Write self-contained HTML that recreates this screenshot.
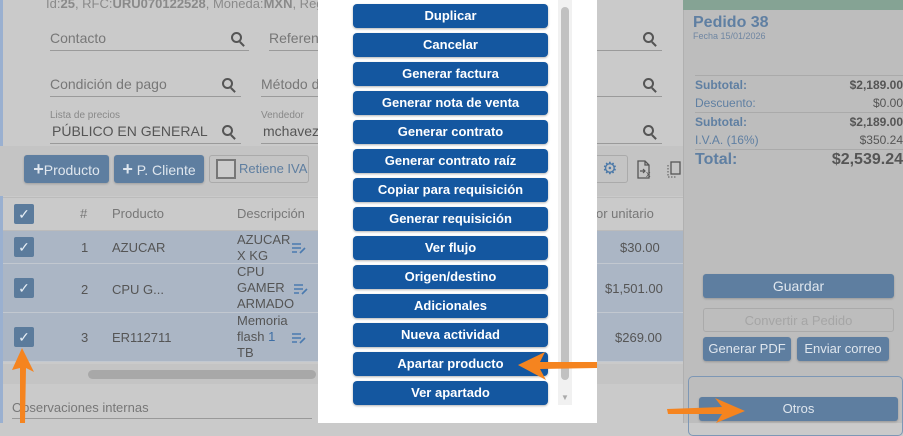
<!DOCTYPE html>
<html><head><meta charset="utf-8"><style>
*{box-sizing:border-box;margin:0;padding:0}
body{width:903px;height:423px;overflow:hidden;position:relative;background:#cacaca;font-family:"Liberation Sans",sans-serif;}
.a{position:absolute;white-space:nowrap}
.t{color:#777;font-size:14px}
.ul{border-bottom:1px solid #9a9a9a}
.btn{position:absolute;background:#5e7ea0;color:#dfe6ee;border-radius:3px;font-size:14px;text-align:center;font-family:"Liberation Sans",sans-serif;box-shadow:0 1px 2px rgba(0,0,0,.2);white-space:nowrap}
.mb{position:absolute;left:353px;width:195px;height:24px;background:#1457a0;color:#fff;border-radius:4px;font-size:13px;font-weight:bold;text-align:center;line-height:24px;font-family:"Liberation Sans",sans-serif;box-shadow:0 1px 2px rgba(0,0,0,.3)}
.cb{position:absolute;left:14px;width:20px;height:20px;background:#5b7b9c;border-radius:2px;color:#e6eef5;font-size:14px;text-align:center;line-height:20px}
.row{position:absolute;left:3px;width:680px;background:#abb6c5;border-bottom:1px solid #c2c8d0}
.mag{position:absolute;width:11px;height:11px;border:2px solid #555;border-radius:50%}
.mag:after{content:"";position:absolute;width:2px;height:6px;background:#555;left:8px;top:7px;transform:rotate(-45deg)}
</style></head><body>
<div class="a" style="left:0;top:0;width:3px;height:423px;background:#9ab0d0"></div>
<div class="a t" style="left:46px;top:-4px;font-size:13px;color:#8a8a8a">Id:<b>25</b>, RFC:<b>URU070122528</b>, Moneda:<b>MXN</b>, Regime</div>
<div class="a t ul" style="left:50px;top:30px;width:199px;height:21px;font-size:14px">Contacto</div><div class="mag" style="left:231px;top:32px"></div>
<div class="a t ul" style="left:269px;top:30px;width:100px;height:21px">Referen</div>
<div class="a t ul" style="left:50px;top:76px;width:191px;height:21px">Condición de pago</div><div class="mag" style="left:222px;top:78px"></div>
<div class="a t ul" style="left:261px;top:76px;width:100px;height:21px">Método d</div>
<div class="a" style="left:50px;top:110px;font-size:10px;color:#888">Lista de precios</div>
<div class="a" style="left:261px;top:110px;font-size:10px;color:#888">Vendedor</div>
<div class="a ul" style="left:50px;top:123px;width:191px;height:21px;font-size:14px;color:#555;padding-left:2px">PÚBLICO EN GENERAL</div><div class="mag" style="left:222px;top:125px"></div>
<div class="a ul" style="left:261px;top:123px;width:100px;height:21px;font-size:14px;color:#555;padding-left:2px">mchavez</div>
<div class="mag" style="left:643px;top:32px"></div><div class="mag" style="left:643px;top:78px"></div><div class="mag" style="left:643px;top:125px"></div>
<div class="a ul" style="left:560px;top:30px;width:102px;height:21px"></div>
<div class="a ul" style="left:560px;top:76px;width:102px;height:21px"></div>
<div class="a ul" style="left:560px;top:123px;width:102px;height:21px"></div>
<div class="a" style="left:0;top:146px;width:683px;height:50px;background:#c4c4c4"></div>
<div class="btn" style="left:24px;top:155px;width:85px;height:28px;line-height:28px"><b style="font-size:18px">+</b>Producto</div>
<div class="btn" style="left:114px;top:155px;width:90px;height:28px;line-height:28px"><b style="font-size:18px">+</b> P. Cliente</div>
<div class="a" style="left:209px;top:155px;width:100px;height:28px;border:1px solid #aaa;border-radius:3px;color:#5e7ea0;font-size:13px;line-height:26px;padding-left:29px">Retiene IVA</div>
<div class="a" style="left:216px;top:159px;width:20px;height:20px;border:2px solid #777;background:#ccc"></div>
<div class="a" style="left:590px;top:155px;width:38px;height:28px;border:1px solid #aaa;border-radius:3px;color:#5e7ea0;font-size:13px;line-height:26px">s<span style="font-size:17px;color:#4a78a8"> ⚙</span></div>
<svg class="a" style="left:636px;top:160px" width="46" height="20"><path d="M2 1h7l4 4v13H2z M9 1v4h4" fill="none" stroke="#555" stroke-width="1.3"/><path d="M4 11h5m-2-2 2 2-2 2" fill="none" stroke="#555" stroke-width="1.2"/><text x="10" y="17" font-size="9" fill="#555" font-family="Liberation Sans">x</text><rect x="35" y="2" width="9" height="12" fill="none" stroke="#555" stroke-width="1.3"/><path d="M32 5v12h9" fill="none" stroke="#555" stroke-dasharray="1.5 1.5"/></svg>
<div class="a" style="left:3px;top:197px;width:680px;height:34px;background:#cacaca;border-top:1px solid #bbb;border-bottom:1px solid #bbb"></div>
<div class="cb" style="top:204px">✓</div>
<div class="a" style="left:80px;top:206px;font-size:13px;color:#777">#</div>
<div class="a" style="left:112px;top:206px;font-size:13px;color:#777">Producto</div>
<div class="a" style="left:237px;top:206px;font-size:13px;color:#777">Descripción</div>
<div class="a" style="left:596px;top:206px;font-size:13px;color:#777">or unitario</div>
<div class="row" style="top:231px;height:33px"></div>
<div class="row" style="top:264px;height:49px"></div>
<div class="row" style="top:313px;height:49px"></div>
<div class="cb" style="top:237px">✓</div><div class="cb" style="top:278px">✓</div><div class="cb" style="top:327px">✓</div>
<div class="a" style="left:81px;top:240px;font-size:13px;color:#555">1</div>
<div class="a" style="left:81px;top:282px;font-size:13px;color:#555">2</div>
<div class="a" style="left:81px;top:330px;font-size:13px;color:#555">3</div>
<div class="a" style="left:112px;top:240px;font-size:13px;color:#555">AZUCAR</div>
<div class="a" style="left:112px;top:282px;font-size:13px;color:#555">CPU G...</div>
<div class="a" style="left:112px;top:330px;font-size:13px;color:#555">ER112711</div>
<div class="a" style="left:237px;top:232px;font-size:13px;color:#555;line-height:16px">AZUCAR<br>X KG</div>
<div class="a" style="left:237px;top:264px;font-size:13px;color:#555;line-height:16px">CPU<br>GAMER<br>ARMADO</div>
<div class="a" style="left:237px;top:313px;font-size:13px;color:#555;line-height:16px">Memoria<br>flash <span style="color:#3d6ea5">1</span><br>TB</div>
<svg class="a" style="left:292px;top:242px" width="16" height="12"><path d="M0 2h9M0 6h9M0 10h5M8 11l5-5" stroke="#4a7ab0" stroke-width="1.6"/></svg>
<svg class="a" style="left:294px;top:283px" width="16" height="12"><path d="M0 2h9M0 6h9M0 10h5M8 11l5-5" stroke="#4a7ab0" stroke-width="1.6"/></svg>
<svg class="a" style="left:292px;top:332px" width="16" height="12"><path d="M0 2h9M0 6h9M0 10h5M8 11l5-5" stroke="#4a7ab0" stroke-width="1.6"/></svg>
<div class="a" style="left:620px;top:240px;font-size:13px;color:#555">$30.00</div>
<div class="a" style="left:605px;top:281px;font-size:13px;color:#555">$1,501.00</div>
<div class="a" style="left:615px;top:330px;font-size:13px;color:#555">$269.00</div>
<div class="a" style="left:3px;top:364px;width:680px;height:20px;background:#c4c4c4"></div>
<div class="a" style="left:88px;top:370px;width:228px;height:9px;background:#a8a8a8;border-radius:5px"></div>
<div class="a" style="left:12px;top:400px;font-size:13px;color:#777">Observaciones internas</div>
<div class="a" style="left:12px;top:418px;width:300px;border-top:1px solid #999"></div>
<!-- right panel -->
<div class="a" style="left:683px;top:0;width:220px;height:423px;background:#bdbdbd;border-left:1px solid #b0b0b0"></div>
<div class="a" style="left:683px;top:0;width:220px;height:10px;background:#85a394"></div>
<div class="a" style="left:693px;top:14px;font-size:16px;font-weight:bold;color:#5f7fa2">Pedido 38</div>
<div class="a" style="left:693px;top:31px;font-size:9px;color:#6f86a2">Fecha 15/01/2026</div>
<div class="a" style="left:695px;top:75px;width:208px;font-size:12px;color:#5f7fa2;line-height:18px">
<div style="border-top:1px solid #aaa;display:flex;justify-content:space-between"><b>Subtotal:</b><b style="color:#555">$2,189.00</b></div>
<div style="display:flex;justify-content:space-between">Descuento:<span style="color:#555">$0.00</span></div>
<div style="border-top:1px solid #aaa;display:flex;justify-content:space-between"><b>Subtotal:</b><b style="color:#555">$2,189.00</b></div>
<div style="display:flex;justify-content:space-between">I.V.A. (16%)<span style="color:#555">$350.24</span></div>
<div style="border-top:1px solid #aaa;display:flex;justify-content:space-between;font-size:16px;line-height:20px"><b>Total:</b><b style="color:#555">$2,539.24</b></div>
</div>
<div class="btn" style="left:703px;top:274px;width:191px;height:24px;line-height:24px">Guardar</div>
<div class="a" style="left:703px;top:308px;width:191px;height:24px;line-height:24px;border:1px solid #aaa;border-radius:3px;color:#a5a5a5;font-size:13px;text-align:center">Convertir a Pedido</div>
<div class="btn" style="left:703px;top:337px;width:88px;height:24px;line-height:24px;font-size:13px">Generar PDF</div>
<div class="btn" style="left:797px;top:337px;width:92px;height:24px;line-height:24px;font-size:13px">Enviar correo</div>
<div class="a" style="left:688px;top:376px;width:215px;height:60px;border:1px solid #7d97b5;border-radius:5px"></div>
<div class="btn" style="left:699px;top:397px;width:199px;height:24px;line-height:24px;font-size:13px">Otros</div>
<!-- modal -->
<div class="a" style="left:318px;top:0;width:279px;height:423px;background:#fff"></div>
<div class="a" style="left:558px;top:0;width:14px;height:405px;background:#f1f1f1"></div>
<div class="a" style="left:561px;top:7px;width:8px;height:373px;background:#c1c1c1;border-radius:4px"></div>
<div class="a" style="left:561px;top:393px;font-size:8px;color:#aaa">▼</div>
<div class="mb" style="top:4px">Duplicar</div>
<div class="mb" style="top:33px">Cancelar</div>
<div class="mb" style="top:62px">Generar factura</div>
<div class="mb" style="top:91px">Generar nota de venta</div>
<div class="mb" style="top:120px">Generar contrato</div>
<div class="mb" style="top:149px">Generar contrato raíz</div>
<div class="mb" style="top:178px">Copiar para requisición</div>
<div class="mb" style="top:207px">Generar requisición</div>
<div class="mb" style="top:236px">Ver flujo</div>
<div class="mb" style="top:265px">Origen/destino</div>
<div class="mb" style="top:294px">Adicionales</div>
<div class="mb" style="top:323px">Nueva actividad</div>
<div class="mb" style="top:352px">Apartar producto</div>
<div class="mb" style="top:381px">Ver apartado</div>
<!-- arrows -->
<svg class="a" style="left:0;top:0" width="903" height="423">
<g fill="#f5841f">
<path d="M518 365 L545 352 L540 362 L597 362 L597 368 L540 369 L546 380 Z"/>
<path d="M22 348 L12 370 L20 368 L20 423 L25 423 L26 368 L34 372 Z"/>
<path d="M667 409 L722 407 L715 398 L745 411 L716 423 L722 414 L668 414 Z"/>
</g></svg>
</body></html>
